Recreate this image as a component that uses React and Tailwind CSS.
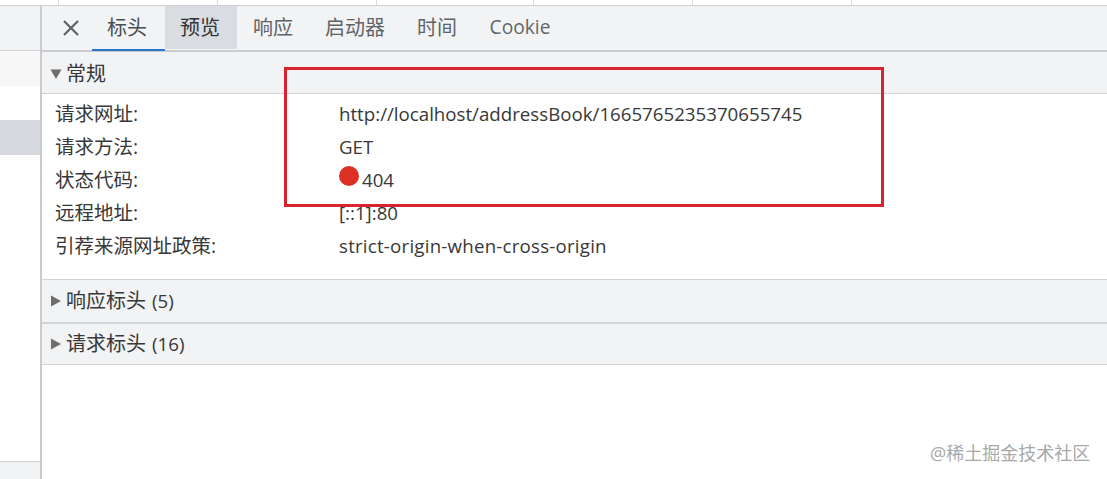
import React from 'react';

const font = { sans: 'font-["Open_Sans","Noto_Sans_CJK_SC",sans-serif]' };

const generalRows = [
  ['请求网址:', 'http://localhost/addressBook/1665765235370655745'],
  ['请求方法:', 'GET'],
  ['状态代码:', '404'],
  ['远程地址:', '[::1]:80'],
  ['引荐来源网址政策:', 'strict-origin-when-cross-origin'],
];

function Arrow({ open }) {
  return (
    <svg width="12" height="12" viewBox="0 0 12 12" className="shrink-0 fill-[#6e6e6e]">
      {open ? <path d="M0.5 1.5h11L6 11z" /> : <path d="M1 0.5v11L11 6z" />}
    </svg>
  );
}

function Section({ title, count, open, className }) {
  return (
    <div className={`flex items-center pl-[8px] gap-[4px] bg-[#f1f3f4] text-[20px] text-[#383838] ${className}`}>
      <Arrow open={open} />
      <span>{title}</span>
      {count && <span className="text-[18.7px] ml-[2px]">{count}</span>}
    </div>
  );
}

function Tab({ label, className }) {
  return (
    <div className={`flex items-center justify-center h-[43px] ${className}`}>{label}</div>
  );
}

export default function App() {
  return (
    <div className={`relative w-[1107px] h-[479px] overflow-hidden bg-white ${font.sans}`}>
      {/* request table columns peeking out above the panel */}
      <div className="flex h-[5px] pl-[58px] border-b-0">
        {[159, 159, 157, 159, 159, 158].map((w, i) => (
          <div key={i} className="h-full border-l border-[#dadce0]" style={{ width: w }} />
        ))}
      </div>
      <div className="h-[1px] bg-[#cdcfd2]" />

      <div className="flex h-[473px]">
        {/* sidebar */}
        <div className="w-[40px] shrink-0 flex flex-col bg-white">
          <div className="h-[45px] bg-[#f1f3f4] border-b border-[#cfd1d4]" />
          <div className="h-[35px] bg-[#f7f7f7]" />
          <div className="h-[34px] bg-white" />
          <div className="h-[35px] bg-[#d6d9dd]" />
          <div className="flex-1" />
          <div className="h-[18px] bg-[#f1f3f4] border-t border-[#cfd1d4]" />
        </div>
        <div className="w-[2px] shrink-0 bg-[#c9cbce]" />

        {/* details */}
        <div className="flex-1 flex flex-col">
          <div className="flex h-[46px] bg-[#f1f3f4] border-b-2 border-[#cacccf] text-[20px] text-[#5f6368]">
            <div className="w-[50px] h-[43px] flex items-center justify-center pl-[7px]">
              <svg width="18" height="18" viewBox="0 0 18 18" className="stroke-[#5f6368] stroke-[2.2]">
                <path d="M2 2l14 14M16 2L2 16" />
              </svg>
            </div>
            <Tab label="标头" className="w-[73px] h-[45px] pr-[3px] border-b-2 border-[#2a74c9] mb-[-2px] text-[#4a4d51]" />
            <Tab label="预览" className="w-[72px] pr-[2px] bg-[#d9dde2] text-[#303236]" />
            <Tab label="响应" className="w-[72px]" />
            <Tab label="启动器" className="w-[92px]" />
            <Tab label="时间" className="w-[72px]" />
            <Tab label="Cookie" className="w-[94px] text-[19.2px] text-[#636669]" />
          </div>

          <Section title="常规" open className="h-[42px] pt-[2px] border-b border-[#d2d4d6]" />

          <div className="h-[185px] flex flex-col pt-[3px] text-[#383838]">
            {generalRows.map(([name, value]) => (
              <div key={name} className="flex items-center h-[33px] leading-[33px]">
                <span className="w-[297px] pl-[13px] shrink-0 text-[19.5px]">{name}</span>
                <span
                  className={`text-[18.7px] ${name === '状态代码:' ? 'pl-[23px]' : ''} ${
                    value.startsWith('strict') ? 'tracking-[0.22px]' : ''
                  }`}
                >
                  {value}
                </span>
              </div>
            ))}
          </div>

          <Section title="响应标头" count="(5)" className="h-[43px] border-t border-[#d2d4d6]" />
          <Section title="请求标头" count="(16)" className="h-[43px] border-t-2 border-[#d2d4d6] border-b" />
        </div>
      </div>

      {/* annotation over the screenshot */}
      <div className="absolute left-[284px] top-[67px] w-[600px] h-[140px] border-[3px] border-[#d9232e]" />
      <div className="absolute left-[339px] top-[166px] w-[20px] h-[20px] rounded-full bg-[#dd3024]" />
      <div className="absolute left-[930px] top-[441px] text-[18px] leading-[24px] text-[#a8a8a8]">@稀土掘金技术社区</div>
    </div>
  );
}
